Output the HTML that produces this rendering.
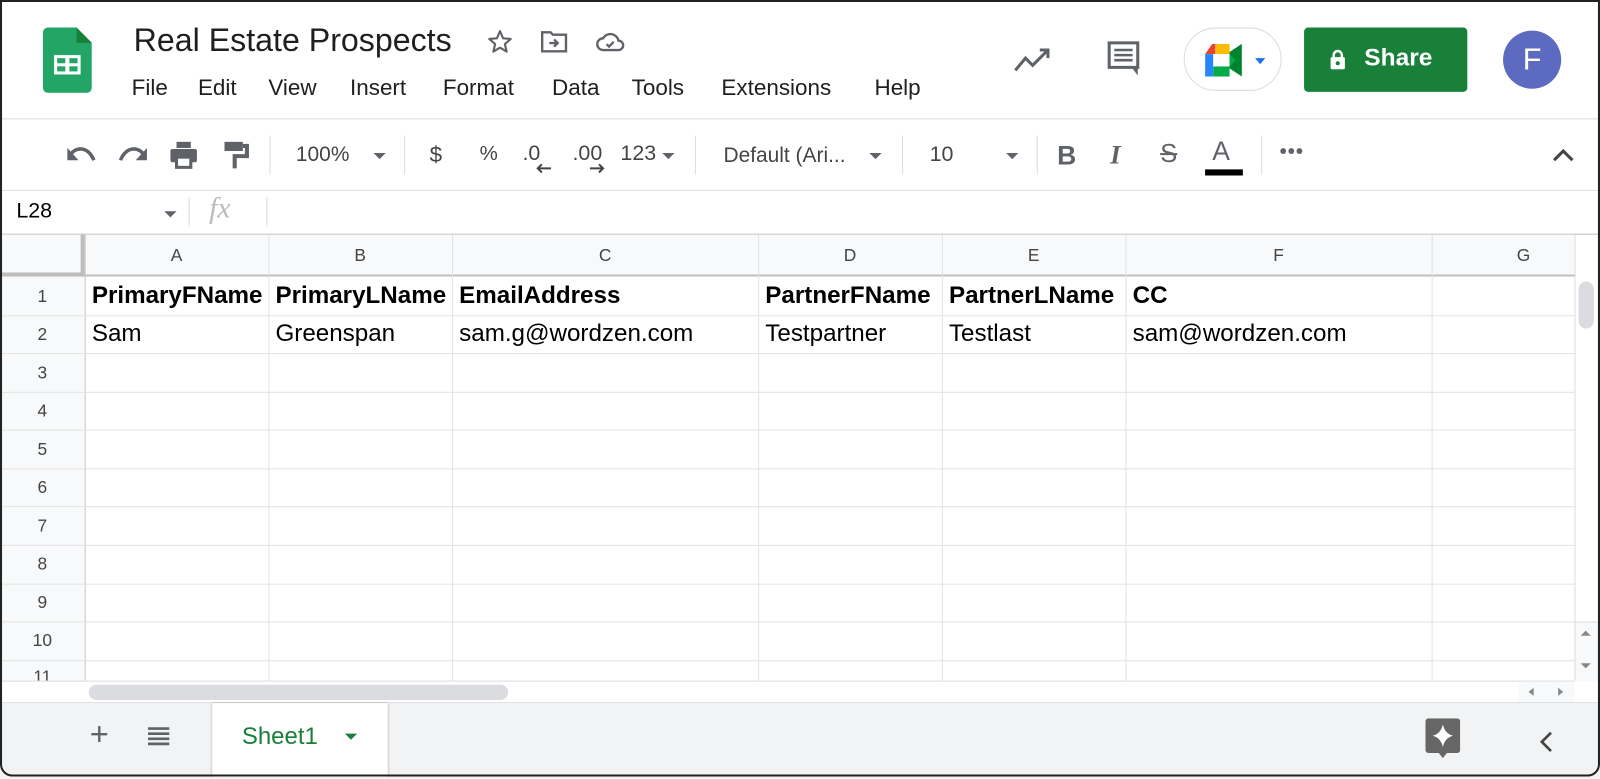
<!DOCTYPE html>
<html><head><meta charset="utf-8"><style>
html,body{margin:0;padding:0;width:1600px;height:777px;overflow:hidden;background:#fff;font-family:"Liberation Sans",Arial,sans-serif}
#w{position:absolute;left:0;top:0;width:1568px;height:762px;transform:scale(1.0204);transform-origin:0 0;background:#fff}
.a{position:absolute;white-space:nowrap}
.t{color:#444;font-size:20px}
.sep{position:absolute;width:1px;background:#dadce0;top:133px;height:38px}
.hl{position:absolute;left:0;width:1543px;height:1px;background:#e2e3e3}
.vl{position:absolute;top:230px;height:437px;width:1px;background:#e2e3e3}
.ch{position:absolute;top:230px;height:41px;line-height:41px;text-align:center;color:#444;font-size:17px}
.rn{position:absolute;left:0;width:83px;text-align:center;color:#444;font-size:17px}
.c{position:absolute;font-size:23.7px;color:#000}
.b{font-weight:bold}
.m{position:absolute;top:73px;font-size:22px;color:#1f1f1f}
.dd{position:absolute;width:0;height:0;border-left:6px solid transparent;border-right:6px solid transparent;border-top:6px solid #5f6368}
</style></head><body><div id="w">
<div class="a" style="left:0;top:0;width:1564px;height:757px;border:2px solid #222;border-radius:0 0 12px 12px;pointer-events:none;z-index:5"></div>

<svg class="a" style="left:42px;top:27px" width="48" height="64" viewBox="0 0 48 64">
<path d="M5 0H33L48 15V59a5 5 0 0 1-5 5H5a5 5 0 0 1-5-5V5a5 5 0 0 1 5-5z" fill="#23a566"/>
<path d="M33 0V15H48z" fill="#188038"/>
<rect x="11" y="27" width="26" height="19" fill="#fff"/>
<rect x="14" y="30" width="8" height="5" fill="#23a566"/><rect x="26" y="30" width="8" height="5" fill="#23a566"/>
<rect x="14" y="38" width="8" height="5" fill="#23a566"/><rect x="26" y="38" width="8" height="5" fill="#23a566"/>
</svg>
<div class="a" style="left:131px;top:21px;font-size:31.5px;color:#1f1f1f">Real Estate Prospects</div>
<svg class="a" style="left:476px;top:27px" width="28" height="28" viewBox="0 0 24 24"><path d="M12 3l2.6 6 6.4.6-4.9 4.3 1.5 6.3L12 16.9 6.4 20.2l1.5-6.3L3 9.6 9.4 9z" fill="none" stroke="#5f6368" stroke-width="1.8" stroke-linejoin="round"/></svg>
<svg class="a" style="left:529px;top:28px" width="28" height="26" viewBox="0 0 24 22"><path d="M2 3h7l2 2h11v14H2z" fill="none" stroke="#5f6368" stroke-width="2"/><path d="M8 12h7M12 9l3 3-3 3" fill="none" stroke="#5f6368" stroke-width="2"/></svg>
<svg class="a" style="left:583px;top:29px" width="30" height="24" viewBox="0 0 26 20"><path d="M7 17a5 5 0 0 1 0-10 7 7 0 0 1 13 2 4 4 0 0 1 0 8z" fill="none" stroke="#5f6368" stroke-width="2"/><path d="M10 12l2 2 4-4" fill="none" stroke="#5f6368" stroke-width="2"/></svg>
<div class="m" style="left:129px">File</div>
<div class="m" style="left:194px">Edit</div>
<div class="m" style="left:263px">View</div>
<div class="m" style="left:343px">Insert</div>
<div class="m" style="left:434px">Format</div>
<div class="m" style="left:541px">Data</div>
<div class="m" style="left:619px">Tools</div>
<div class="m" style="left:707px">Extensions</div>
<div class="m" style="left:857px">Help</div>
<svg class="a" style="left:993px;top:45px" width="38" height="26" viewBox="0 0 38 26"><path d="M2 24l10-12 7 7 14-14M26 4h8v8" fill="none" stroke="#5f6368" stroke-width="3"/></svg>
<svg class="a" style="left:1084px;top:40px" width="36" height="36" viewBox="0 0 36 36"><path d="M3 2h28v24H3z" fill="none" stroke="#5f6368" stroke-width="3"/><path d="M31 26v8l-6-8" fill="#5f6368"/><path d="M8 9h18M8 14h18M8 19h18" stroke="#5f6368" stroke-width="2.5"/></svg>
<div class="a" style="left:1160px;top:27px;width:96px;height:62px;border:1px solid #dadce0;border-radius:32px;box-sizing:border-box"></div>
<svg class="a" style="left:1181px;top:43px" width="60" height="34" viewBox="0 0 60 34">
<path d="M7 0h3v10H0z" fill="#ea4335"/><path d="M10 0h14v10H10z" fill="#fbbc04"/><path d="M0 10h8v22H0z" fill="#2684fc"/><path d="M8 22h16v10H8z" fill="#00ac47"/>
<path d="M24 8l12-8v32l-12-8z" fill="#00832d"/><rect x="8" y="10" width="16" height="12" fill="#fff"/><path d="M24 10v12l6-6z" fill="#00ac47"/>
<path d="M49 14h10l-5 6z" fill="#1a73e8"/></svg>
<div class="a" style="left:1278px;top:27px;width:160px;height:63px;background:#188038;border-radius:4px"></div>
<svg class="a" style="left:1303px;top:48px" width="16" height="20" viewBox="0 0 16 20"><path d="M4 9V6a4 4 0 0 1 8 0v3" fill="none" stroke="#fff" stroke-width="2.4"/><rect x="1" y="8" width="14" height="12" rx="1.5" fill="#fff"/><circle cx="8" cy="14" r="2" fill="#188038"/></svg>
<div class="a" style="left:1337px;top:43px;font-size:24px;color:#fff;font-weight:bold">Share</div>
<div class="a" style="left:1473px;top:30px;width:57px;height:57px;border-radius:50%;background:#5c6bc0;color:#fff;font-size:30px;line-height:57px;text-align:center">F</div>
<div class="a" style="left:0;top:116px;width:1568px;height:1px;background:#dadce0"></div>

<svg class="a" style="left:64px;top:141px" width="32" height="22" viewBox="0 0 32 22"><path d="M4 12C10 2 22 2 28 16" fill="none" stroke="#5f6368" stroke-width="3.5"/><path d="M2 4v12h11z" fill="#5f6368"/></svg>
<svg class="a" style="left:114px;top:141px" width="32" height="22" viewBox="0 0 32 22"><path d="M28 12C22 2 10 2 4 16" fill="none" stroke="#5f6368" stroke-width="3.5"/><path d="M30 4v12H19z" fill="#5f6368"/></svg>
<svg class="a" style="left:165px;top:137px" width="30" height="30" viewBox="0 0 30 30"><rect x="8" y="2" width="14" height="6" fill="#5f6368"/><rect x="2" y="9" width="26" height="13" rx="2" fill="#5f6368"/><rect x="8" y="17" width="14" height="10" fill="#fff" stroke="#5f6368" stroke-width="3"/></svg>
<svg class="a" style="left:218px;top:137px" width="26" height="30" viewBox="0 0 26 30"><rect x="2" y="2" width="18" height="9" fill="#5f6368"/><path d="M20 6h4v10H12v12" fill="none" stroke="#5f6368" stroke-width="4"/></svg>
<div class="sep" style="left:264px"></div>
<div class="a t" style="left:290px;top:140px;font-size:20.5px">100%</div>
<div class="dd" style="left:366px;top:150px"></div>
<div class="sep" style="left:396px"></div>
<div class="a t" style="left:421px;top:139px;font-size:22px">$</div>
<div class="a t" style="left:470px;top:140px;font-size:20px">%</div>
<div class="a t" style="left:512px;top:139px;font-size:21px">.0</div>
<svg class="a" style="left:524px;top:160px" width="16" height="10"><path d="M16 5H3M7 1L3 5l4 4" fill="none" stroke="#444" stroke-width="2"/></svg>
<div class="a t" style="left:561px;top:139px;font-size:21px">.00</div>
<svg class="a" style="left:578px;top:160px" width="16" height="10"><path d="M0 5h13M9 1l4 4-4 4" fill="none" stroke="#444" stroke-width="2"/></svg>
<div class="a t" style="left:608px;top:139px;font-size:21px">123</div>
<div class="dd" style="left:649px;top:150px"></div>
<div class="sep" style="left:681px"></div>
<div class="a t" style="left:709px;top:141px;font-size:20.5px">Default (Ari...</div>
<div class="dd" style="left:852px;top:150px"></div>
<div class="sep" style="left:884px"></div>
<div class="a t" style="left:911px;top:140px;font-size:21px">10</div>
<div class="dd" style="left:986px;top:150px"></div>
<div class="sep" style="left:1016px"></div>
<div class="a" style="left:1036px;top:137px;font-size:26px;font-weight:bold;color:#5f6368">B</div>
<div class="a" style="left:1088px;top:137px;font-size:26px;font-style:italic;color:#5f6368;font-family:'Liberation Serif',serif;font-weight:bold">I</div>
<div class="a" style="left:1137px;top:137px;font-size:25px;color:#5f6368;text-decoration:line-through">S</div>
<div class="a" style="left:1188px;top:133px;font-size:26px;color:#5f6368">A</div>
<div class="a" style="left:1181px;top:166px;width:37px;height:6px;background:#000"></div>
<div class="sep" style="left:1236px"></div>
<div class="a" style="left:1254px;top:138px;font-size:20px;color:#5f6368;font-weight:bold;letter-spacing:1px">•••</div>
<svg class="a" style="left:1521px;top:145px" width="22" height="14"><path d="M2 12l9-9 9 9" fill="none" stroke="#444" stroke-width="3"/></svg>
<div class="a" style="left:0;top:186px;width:1568px;height:1px;background:#dadce0"></div>

<div class="a" style="left:16px;top:195px;font-size:21px;color:#000">L28</div>
<div class="dd" style="left:161px;top:207px"></div>
<div class="a" style="left:185px;top:193px;width:1px;height:28px;background:#dadce0"></div>
<div class="a" style="left:205px;top:188px;font-size:29px;color:#bbb;font-style:italic;font-family:'Liberation Serif',serif">fx</div>
<div class="a" style="left:261px;top:193px;width:1px;height:28px;background:#dadce0"></div>
<div class="a" style="left:0;top:229px;width:1568px;height:1px;background:#c0c0c0"></div>

<div class="a" style="left:0;top:230px;width:1543px;height:41px;background:#f8f9fa"></div>
<div class="a" style="left:0;top:271px;width:83px;height:396px;background:#f8f9fa"></div>
<div class="a" style="left:0;top:230px;width:79px;height:37px;border-right:4px solid #bdbdbd;border-bottom:4px solid #bdbdbd"></div>
<div class="a" style="left:83px;top:269px;width:1460px;height:2px;background:#c0c0c0"></div>
<div class="vl" style="left:83px;background:#c8c8c8"></div>
<div class="vl" style="left:263px"></div><div class="vl" style="left:443px"></div><div class="vl" style="left:743px"></div>
<div class="vl" style="left:923px"></div><div class="vl" style="left:1103px"></div><div class="vl" style="left:1403px"></div><div class="vl" style="left:1543px;background:#dadce0"></div>
<div class="hl" style="top:309px"></div><div class="hl" style="top:346px"></div><div class="hl" style="top:384px"></div>
<div class="hl" style="top:421px"></div><div class="hl" style="top:459px"></div><div class="hl" style="top:496px"></div>
<div class="hl" style="top:534px"></div><div class="hl" style="top:572px"></div><div class="hl" style="top:609px"></div>
<div class="hl" style="top:647px"></div>
<div class="ch" style="left:83px;width:180px">A</div><div class="ch" style="left:263px;width:180px">B</div>
<div class="ch" style="left:443px;width:300px">C</div><div class="ch" style="left:743px;width:180px">D</div>
<div class="ch" style="left:923px;width:180px">E</div><div class="ch" style="left:1103px;width:300px">F</div>
<div class="ch" style="left:1403px;width:180px">G</div>
<div class="rn" style="top:281px">1</div><div class="rn" style="top:318px">2</div><div class="rn" style="top:356px">3</div>
<div class="rn" style="top:393px">4</div><div class="rn" style="top:431px">5</div><div class="rn" style="top:468px">6</div>
<div class="rn" style="top:506px">7</div><div class="rn" style="top:543px">8</div><div class="rn" style="top:581px">9</div>
<div class="rn" style="top:618px">10</div><div class="rn" style="top:654px;height:13px;overflow:hidden;line-height:19px">11</div>
<div class="c b" style="left:90px;top:277px">PrimaryFName</div>
<div class="c b" style="left:270px;top:277px">PrimaryLName</div>
<div class="c b" style="left:450px;top:277px">EmailAddress</div>
<div class="c b" style="left:750px;top:277px">PartnerFName</div>
<div class="c b" style="left:930px;top:277px">PartnerLName</div>
<div class="c b" style="left:1110px;top:277px">CC</div>
<div class="c" style="left:90px;top:314px">Sam</div>
<div class="c" style="left:270px;top:314px">Greenspan</div>
<div class="c" style="left:450px;top:314px">sam.g@wordzen.com</div>
<div class="c" style="left:750px;top:314px">Testpartner</div>
<div class="c" style="left:930px;top:314px">Testlast</div>
<div class="c" style="left:1110px;top:314px">sam@wordzen.com</div>
<div class="a" style="left:1547px;top:276px;width:15px;height:46px;border-radius:8px;background:#dadce0"></div>
<div class="a" style="left:1544px;top:609px;width:22px;height:58px;background:#f8f9fa;border-top:1px solid #e0e0e0"></div>
<div class="a" style="left:1549px;top:618px;border-left:5px solid transparent;border-right:5px solid transparent;border-bottom:5px solid #888"></div>
<div class="a" style="left:1549px;top:650px;border-left:5px solid transparent;border-right:5px solid transparent;border-top:5px solid #888"></div>
<div class="a" style="left:0;top:667px;width:1543px;height:1px;background:#dadce0"></div>
<div class="a" style="left:87px;top:671px;width:411px;height:15px;border-radius:8px;background:#dadce0"></div>
<div class="a" style="left:1488px;top:668px;width:55px;height:20px;background:#f8f9fa"></div>
<div class="a" style="left:1498px;top:674px;border-top:4px solid transparent;border-bottom:4px solid transparent;border-right:5px solid #888"></div>
<div class="a" style="left:1527px;top:674px;border-top:4px solid transparent;border-bottom:4px solid transparent;border-left:5px solid #888"></div>
<div class="a" style="left:0;top:688px;width:1568px;height:74px;background:#f1f3f4;border-top:1px solid #e0e0e0"></div>
<div class="a" style="left:88px;top:701px;font-size:32px;color:#5f6368">+</div>
<svg class="a" style="left:145px;top:712px" width="21" height="20"><path d="M0 2h21M0 7h21M0 12h21M0 17h21" stroke="#5f6368" stroke-width="2.6"/></svg>
<div class="a" style="left:208px;top:689px;width:172px;height:73px;background:#fff;box-shadow:1px 0 2px rgba(0,0,0,.2),-1px 0 2px rgba(0,0,0,.15)"></div>
<div class="a" style="left:237px;top:708px;font-size:23.5px;color:#188038">Sheet1</div>
<div class="a" style="left:338px;top:719px;border-left:6px solid transparent;border-right:6px solid transparent;border-top:6px solid #188038"></div>
<svg class="a" style="left:1397px;top:704px" width="34" height="42" viewBox="0 0 34 42"><rect x="0" y="0" width="34" height="34" rx="3" fill="#666"/><path d="M13 34l4 5 4-5z" fill="#666"/><path d="M17 6q2 9 10 11q-8 2-10 11q-2-9-10-11q8-2 10-11z" fill="#fff"/></svg>
<svg class="a" style="left:1508px;top:716px" width="14" height="22"><path d="M12 2L3 11l9 9" fill="none" stroke="#444" stroke-width="2.6"/></svg>
</div></body></html>
